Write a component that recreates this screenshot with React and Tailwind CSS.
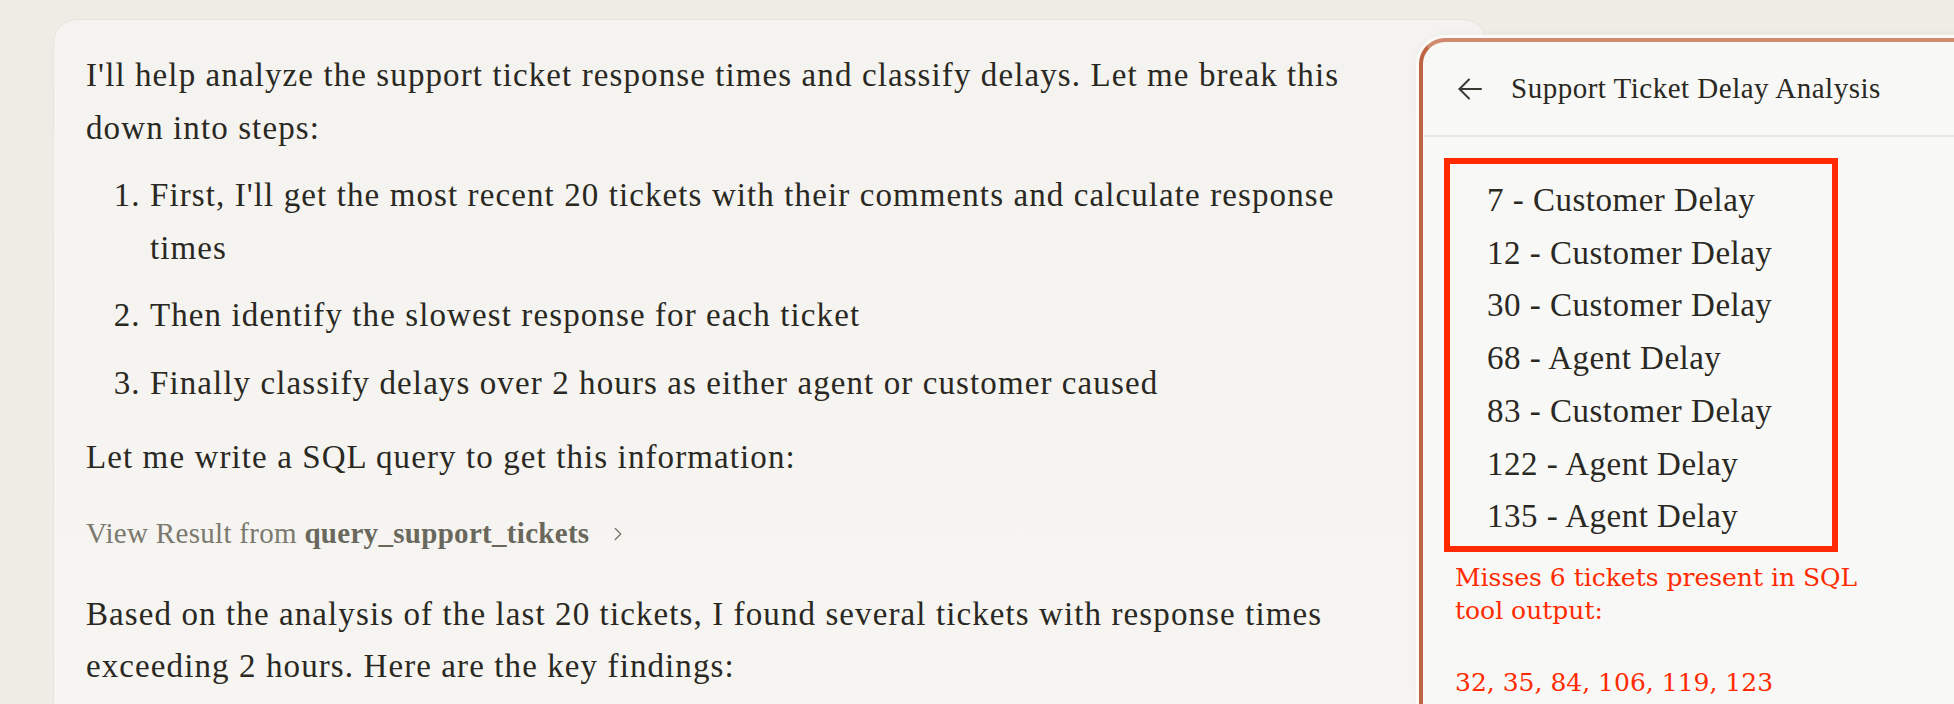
import { ChevronRight } from 'lucide-react';

const STEPS = [
  ["First, I'll get the most recent 20 tickets with their comments and calculate response", 'times'],
  ['Then identify the slowest response for each ticket'],
  ['Finally classify delays over 2 hours as either agent or customer caused'],
];

const DELAYS = [
  '7 - Customer Delay',
  '12 - Customer Delay',
  '30 - Customer Delay',
  '68 - Agent Delay',
  '83 - Customer Delay',
  '122 - Agent Delay',
  '135 - Agent Delay',
];

function BackArrow() {
  return (
    <svg width="24" height="22" viewBox="0 0 24 22" fill="none" stroke="#3a3831" strokeWidth="2" strokeLinecap="round" strokeLinejoin="round">
      <path d="M1.5 11H23" />
      <path d="M11 1.5 1.5 11l9.5 9.5" />
    </svg>
  );
}

export default function App() {
  return (
    <div className="flex h-[704px] w-full overflow-hidden bg-[#eeece5] font-['Liberation_Serif',serif] text-[#2a2822]">
      {/* chat message */}
      <div className="ml-[53px] mt-[19px] h-[760px] w-[1434px] shrink-0 rounded-[24px] border border-[#e6e4dc] bg-gradient-to-b from-[#f4f3ef] to-[#f6f5f1] pl-[32px] pt-[29px] text-[33px] tracking-[1.1px]">
        <p className="leading-[52.5px]">
          I'll help analyze the support ticket response times and classify delays. Let me break this
          <br />
          down into steps:
        </p>

        <ol className="mt-[15px] list-decimal space-y-[15px] pl-[64px] leading-[52.5px]">
          {STEPS.map((lines, i) => (
            <li key={i}>
              {lines.map((line, j) => (
                <span key={j} className="block">
                  {line}
                </span>
              ))}
            </li>
          ))}
        </ol>

        <p className="mt-[22px] leading-[52.5px]">Let me write a SQL query to get this information:</p>

        <div className="mt-[24px] flex h-[52px] items-center text-[29px] tracking-[0.3px] text-[#7b796e]">
          <span>View Result from&nbsp;</span>
          <span className="font-bold text-[#6a685c]">query_support_tickets</span>
          <ChevronRight className="ml-[18px] h-[22px] w-[22px]" strokeWidth={1.5} />
        </div>

        <p className="mt-[28px] leading-[52.5px]">
          Based on the analysis of the last 20 tickets, I found several tickets with response times
          <br />
          exceeding 2 hours. Here are the key findings:
        </p>
      </div>

      {/* artifact panel */}
      <div className="relative z-10 -ml-[68px] mt-[38px] h-[720px] w-[620px] shrink-0 rounded-tl-[26px] border-l-[4px] border-t-[4px] border-l-[#bf6443] border-t-[#cf8a70] bg-[#f8f8f6] shadow-[0_0_0_3px_#fbfaf7,0_0_14px_rgba(0,0,0,0.06)]">
        <div className="flex h-[95px] items-center border-b-2 border-[#e8e7e2] pl-[35px]">
          <BackArrow />
          <span className="ml-[29px] text-[29px] tracking-[0.5px]">Support Ticket Delay Analysis</span>
        </div>

        <div className="p-[21px]">
          <ul className="w-[394px] border-[6px] border-[#ff2a00] pb-[3px] pl-[37px] pt-[10px] text-[33px] leading-[52.7px] tracking-[0.5px]">
            {DELAYS.map((d) => (
              <li key={d}>{d}</li>
            ))}
          </ul>

          <div className="mt-[9px] pl-[11px] font-['DejaVu_Serif',serif] text-[25px] leading-[33px] text-[#ff2a00]">
            <p>
              Misses 6 tickets present in SQL
              <br />
              tool output:
            </p>
            <p className="mt-[39px]">32, 35, 84, 106, 119, 123</p>
          </div>
        </div>
      </div>
    </div>
  );
}
